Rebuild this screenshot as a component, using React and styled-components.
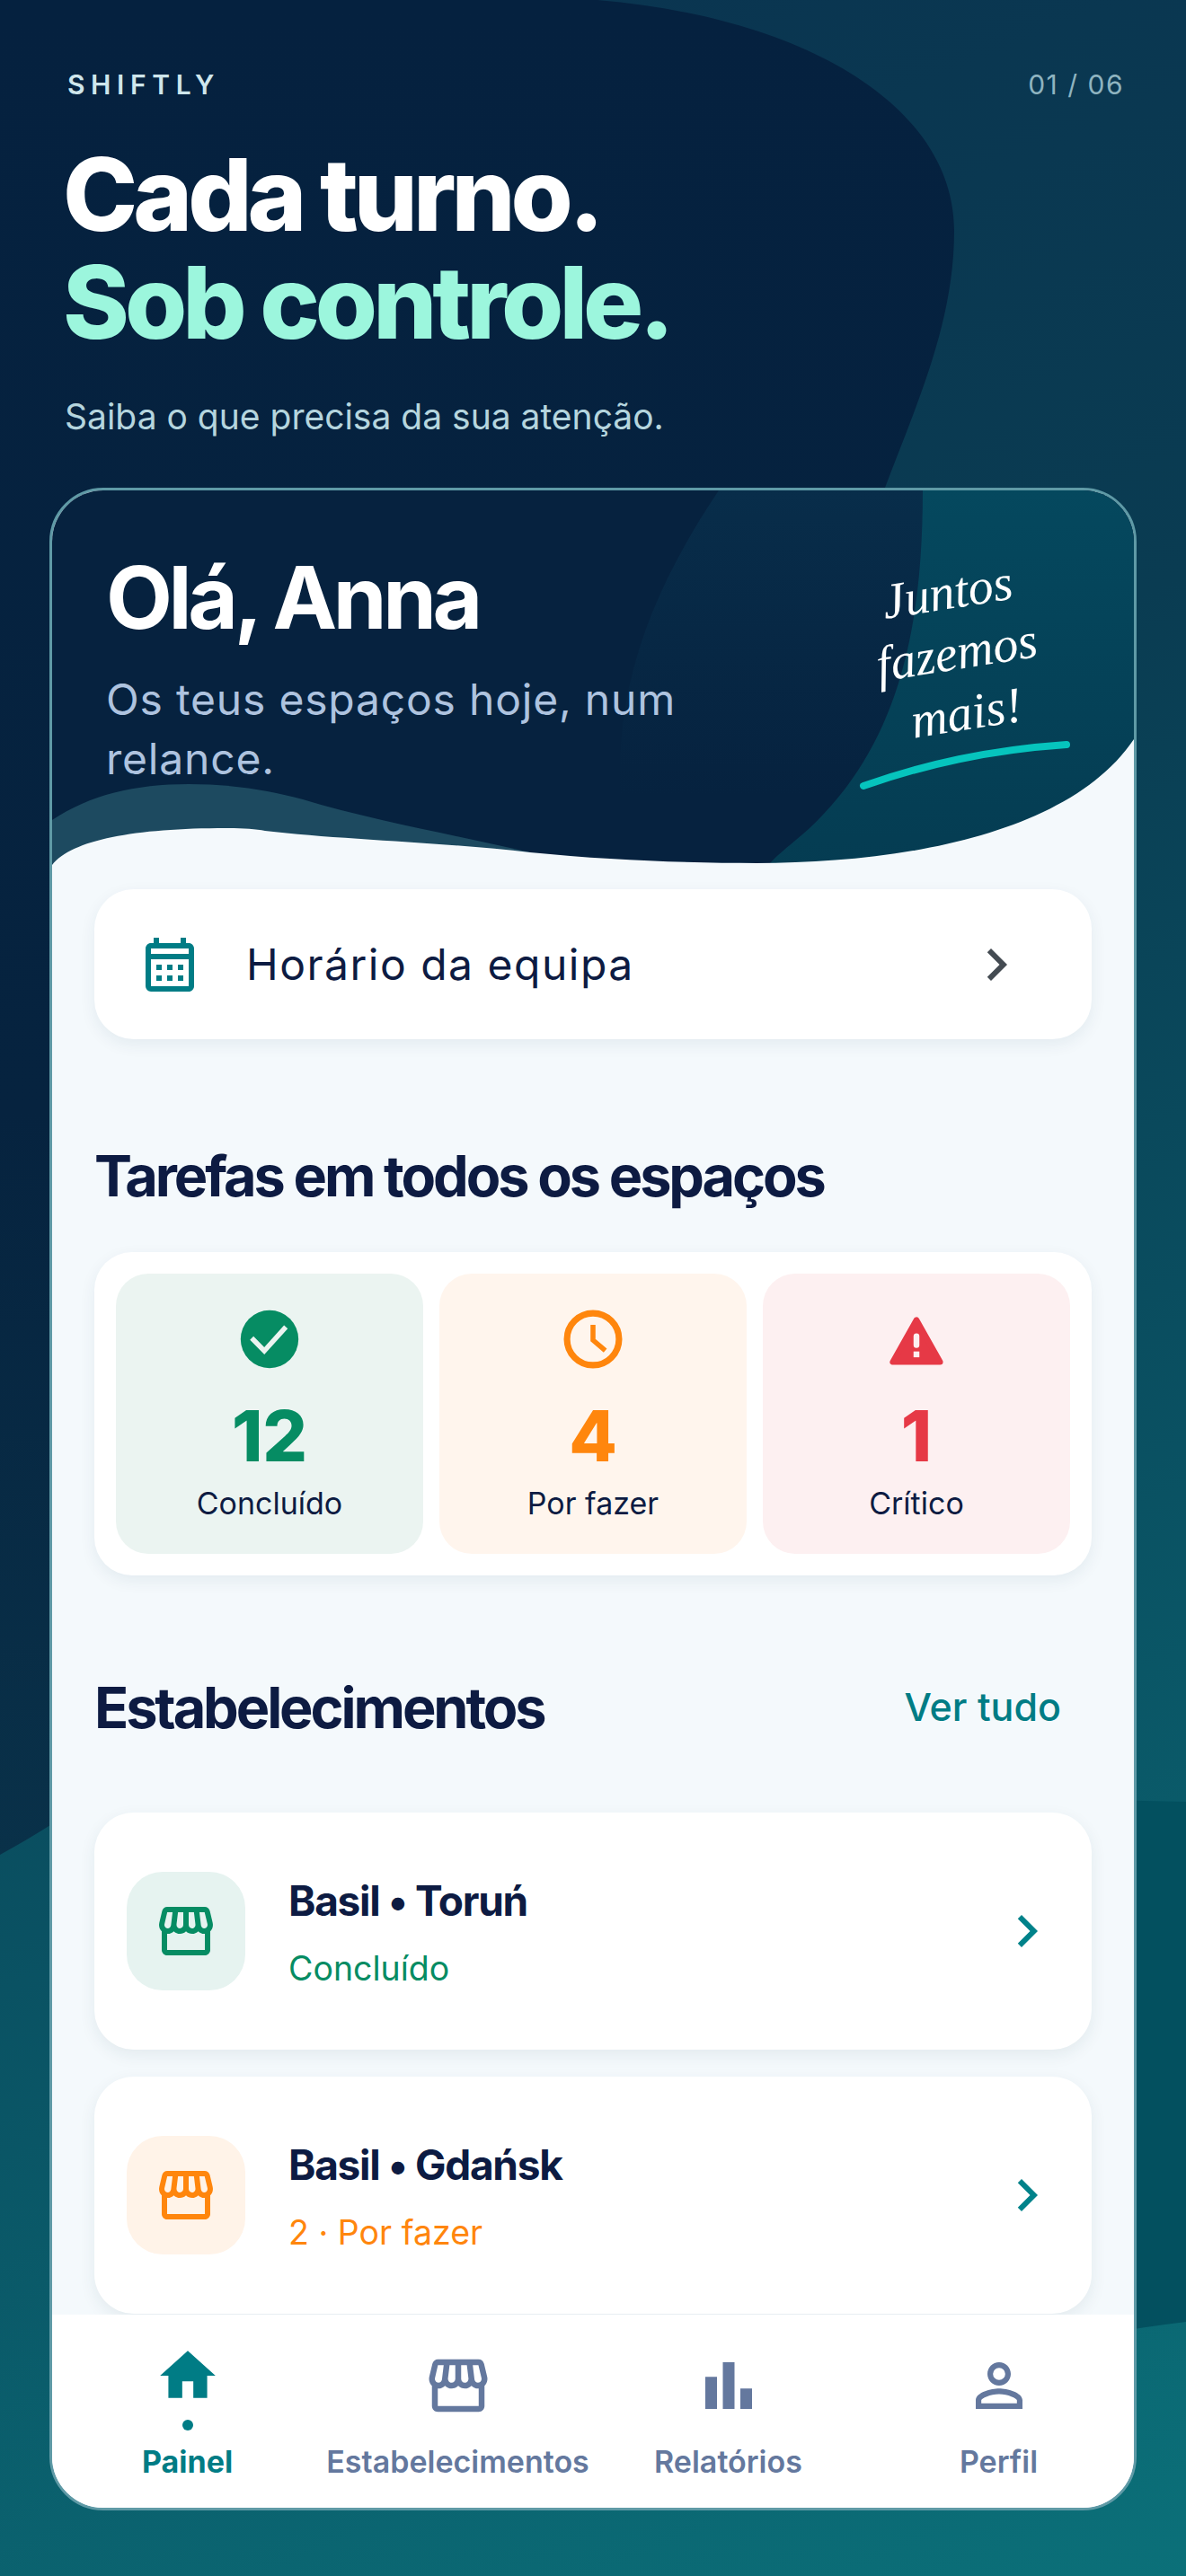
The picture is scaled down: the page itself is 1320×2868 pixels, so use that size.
import React from 'react'
import styled, { createGlobalStyle } from 'styled-components'
import {
  MdOutlineCalendarMonth,
  MdChevronRight,
  MdOutlineStorefront,
  MdHome,
  MdBarChart,
  MdPersonOutline,
} from 'react-icons/md'

function CheckIcon({ size }) {
  return (
    <svg width={size} height={size} viewBox="0 0 24 24">
      <circle cx="12" cy="12" r="9.9" fill="currentColor" />
      <path d="M5.9 11.6L10.2 16L17.6 7.8" fill="none" stroke="#ebf4f1" strokeWidth="1.7" />
    </svg>
  )
}

function ClockIcon({ size }) {
  return (
    <svg width={size} height={size} viewBox="0 0 24 24" fill="none" stroke="currentColor">
      <circle cx="12" cy="12" r="8.9" strokeWidth="2.2" />
      <path d="M12 7.1V12.3L16.2 15.9" strokeWidth="1.7" />
    </svg>
  )
}

function WarningIcon({ size }) {
  return (
    <svg width={size} height={size} viewBox="0 0 24 24">
      <path
        d="M12 5.4L3.9 19.8H20.1Z"
        fill="currentColor"
        stroke="currentColor"
        strokeWidth="2"
        strokeLinejoin="round"
      />
      <rect x="11" y="10" width="2" height="5" rx="1" fill="#fdf0f1" />
      <rect x="11" y="16.2" width="2" height="2" fill="#fdf0f1" />
    </svg>
  )
}

const stats = [
  { value: '12', label: 'Concluído', color: '#068c63', bg: '#ebf4f1', Icon: CheckIcon },
  { value: '4', label: 'Por fazer', color: '#ff860d', bg: '#fff5ed', Icon: ClockIcon },
  { value: '1', label: 'Crítico', color: '#e63946', bg: '#fdf0f1', Icon: WarningIcon },
]

const places = [
  { name: 'Basil • Toruń', status: 'Concluído', color: '#068c63', bg: '#e6f3f0' },
  { name: 'Basil • Gdańsk', status: '2 · Por fazer', color: '#ff860d', bg: '#fff3e8' },
]

const tabs = [
  { label: 'Painel', Icon: MdHome, active: true },
  { label: 'Estabelecimentos', Icon: MdOutlineStorefront },
  { label: 'Relatórios', Icon: MdBarChart },
  { label: 'Perfil', Icon: MdPersonOutline },
]

function App() {
  return (
    <Stage>
      <GlobalStyle />
      <Backdrop viewBox="0 0 1320 2868" preserveAspectRatio="none">
        <defs>
          <linearGradient id="blob" x1="0" y1="0" x2="0" y2="1">
            <stop offset="0" stopColor="#05213f" />
            <stop offset="0.6" stopColor="#06233f" />
            <stop offset="1" stopColor="#093149" />
          </linearGradient>
        </defs>
        <path
          d="M0 0H665C900 20 1062 120 1062 257C1062 360 1020 450 985 543C950 1100 400 1850 0 2065Z"
          fill="url(#blob)"
        />
        <path d="M1000 2000L1320 2006V2585C1200 2600 1100 2620 1000 2640Z" fill="#03505f" />
      </Backdrop>

      <TopBar>
        <Brand>SHIFTLY</Brand>
        <Pager>01 / 06</Pager>
      </TopBar>
      <Headline>
        Cada turno.
        <br />
        <em>Sob controle.</em>
      </Headline>
      <Tagline>Saiba o que precisa da sua atenção.</Tagline>

      <Phone>
        <Hero>
          <HeroArt viewBox="58 546 1204 424" preserveAspectRatio="none">
            <defs>
              <linearGradient id="heroFaint" x1="0" y1="0" x2="0" y2="1">
                <stop offset="0" stopColor="#082d4a" />
                <stop offset="0.8" stopColor="#082d4a" stopOpacity="0" />
              </linearGradient>
              <linearGradient id="heroTeal" x1="0" y1="0" x2="0" y2="1">
                <stop offset="0" stopColor="#05485e" />
                <stop offset="1" stopColor="#053c52" />
              </linearGradient>
            </defs>
            <rect x="58" y="546" width="1204" height="424" fill="#06223f" />
            <path d="M800 546C730 650 690 750 690 860V970H1262V546Z" fill="url(#heroFaint)" />
            <path d="M1027 546C1027 700 1000 830 900 923C875 945 860 955 850 970H1262V546Z" fill="url(#heroTeal)" />
            <path d="M58 913C100 885 150 873 210 873C260 873 300 880 337 890C420 915 510 930 590 949L300 970H58Z" fill="#1d4a60" />
            <path
              d="M58 963C80 935 150 922 252 922C270 922 285 923 295 925C380 935 500 938 590 949C680 958 770 961 842 961C1000 961 1190 930 1262 823V970H58Z"
              fill="#f4f9fc"
            />
            <path d="M961 875C1030 851 1100 835 1187 829" fill="none" stroke="#06c4bd" strokeWidth="8" strokeLinecap="round" />
          </HeroArt>
          <HeroText>
            <Greeting>Olá, Anna</Greeting>
            <Lead>Os teus espaços hoje, num relance.</Lead>
          </HeroText>
          <Note>
            <span>Juntos</span>
            <span>fazemos</span>
            <span>mais!</span>
          </Note>
        </Hero>

        <Body>
          <Shortcut>
            <ShortcutIcon><MdOutlineCalendarMonth size={72} /></ShortcutIcon>
            <ShortcutLabel>Horário da equipa</ShortcutLabel>
            <MdChevronRight size={72} color="#444b52" />
          </Shortcut>

          <SectionTitle>Tarefas em todos os espaços</SectionTitle>
          <StatPanel>
            {stats.map(({ value, label, color, bg, Icon }) => (
              <StatTile key={label} $bg={bg} $color={color}>
                <Icon size={78} />
                <StatValue>{value}</StatValue>
                <StatLabel>{label}</StatLabel>
              </StatTile>
            ))}
          </StatPanel>

          <SectionRow>
            <RowTitle>Estabelecimentos</RowTitle>
            <SeeAll>Ver tudo</SeeAll>
          </SectionRow>
          <PlaceList>
            {places.map((place) => (
              <Place key={place.name}>
                <PlaceIcon $bg={place.bg} $color={place.color}>
                  <MdOutlineStorefront size={72} />
                </PlaceIcon>
                <PlaceText>
                  <PlaceName>{place.name}</PlaceName>
                  <PlaceStatus $color={place.color}>{place.status}</PlaceStatus>
                </PlaceText>
                <MdChevronRight size={72} color="#00828a" />
              </Place>
            ))}
          </PlaceList>
        </Body>

        <TabBar>
          {tabs.map(({ label, Icon, active }) => (
            <Tab key={label} $active={active}>
              <TabIcon $active={active}>
                <Icon size={active ? 74 : 78} />
                {active && <ActiveDot />}
              </TabIcon>
              <TabLabel $active={active}>{label}</TabLabel>
            </Tab>
          ))}
        </TabBar>
      </Phone>
    </Stage>
  )
}

const GlobalStyle = createGlobalStyle`
  html, body {
    margin: 0;
    padding: 0;
  }
  body {
    font-family: Inter, "Noto Sans", sans-serif;
  }
`

const Stage = styled.div`
  position: relative;
  width: 1320px;
  height: 2868px;
  overflow: hidden;
  box-sizing: border-box;
  padding: 76px 55px 0;
  background: linear-gradient(157deg, #0a3350 0%, #0a3c52 35%, #0a5666 70%, #0b7079 100%);
`

const Backdrop = styled.svg`
  position: absolute;
  inset: 0;
  width: 100%;
  height: 100%;
`

const TopBar = styled.div`
  position: relative;
  display: flex;
  justify-content: space-between;
  align-items: center;
  height: 36px;
  padding: 0 14px 0 20px;
`

const Brand = styled.div`
  font-size: 30px;
  font-weight: 600;
  letter-spacing: 0.22em;
  color: #cfe6ec;
`

const Pager = styled.div`
  font-size: 30px;
  letter-spacing: 0.05em;
  color: #8fb4c0;
`

const Headline = styled.h1`
  position: relative;
  margin: 44px 0 0 15px;
  font-size: 112px;
  line-height: 120px;
  font-weight: 800;
  letter-spacing: -5px;
  color: #fff;

  em {
    font-style: normal;
    color: #9cf6dd;
  }
`

const Tagline = styled.p`
  position: relative;
  margin: 40px 0 0 17px;
  font-size: 39px;
  line-height: 56px;
  color: #b5d5de;
`

const Phone = styled.div`
  position: relative;
  display: flex;
  flex-direction: column;
  box-sizing: border-box;
  width: 1210px;
  height: 2252px;
  margin-top: 51px;
  border: 3px solid #5f9aa6;
  border-radius: 60px;
  overflow: hidden;
  background: #f4f9fc;
`

const Hero = styled.div`
  position: relative;
  flex: none;
  display: flex;
  justify-content: space-between;
  height: 424px;
  box-sizing: border-box;
  padding: 64px 107px 0 60px;
`

const HeroArt = styled.svg`
  position: absolute;
  inset: 0;
  width: 100%;
  height: 100%;
`

const HeroText = styled.div`
  position: relative;
  width: 700px;
`

const Greeting = styled.h2`
  margin: 0;
  font-size: 96px;
  line-height: 110px;
  font-weight: 700;
  letter-spacing: -4.4px;
  color: #fff;
`

const Lead = styled.p`
  margin: 26px 0 0;
  font-size: 48px;
  line-height: 66px;
  letter-spacing: 0.8px;
  color: #aec3df;
`

const Note = styled.div`
  position: relative;
  display: flex;
  flex-direction: column;
  align-items: center;
  margin-top: 14px;
  transform: rotate(-9deg);
  font-family: "Liberation Serif", serif;
  font-style: italic;
  font-size: 56px;
  line-height: 68px;
  color: #fff;
  height: 210px;

  span {
    display: block;
  }
`

const Body = styled.div`
  flex: 1;
  min-height: 0;
  overflow: hidden;
  padding: 20px 47px 0;
`

const Shortcut = styled.div`
  display: flex;
  align-items: center;
  height: 167px;
  padding: 0 70px 0 48px;
  border-radius: 44px;
  background: #fff;
  box-shadow: 0 6px 18px rgba(20, 60, 80, 0.07);
`

const ShortcutIcon = styled.div`
  display: flex;
  color: #007c85;
`

const ShortcutLabel = styled.div`
  flex: 1;
  margin-left: 49px;
  font-size: 48px;
  letter-spacing: 1.5px;
  color: #0d1b42;
`

const SectionTitle = styled.h3`
  margin: 116px 0 0;
  font-size: 63px;
  line-height: 72px;
  font-weight: 700;
  letter-spacing: -3.1px;
  color: #0d1b42;
`

const StatPanel = styled.div`
  display: grid;
  grid-template-columns: repeat(3, 1fr);
  gap: 18px;
  margin-top: 49px;
  padding: 24px;
  border-radius: 42px;
  background: #fff;
  box-shadow: 0 6px 18px rgba(20, 60, 80, 0.07);
`

const StatTile = styled.div`
  display: flex;
  flex-direction: column;
  align-items: center;
  height: 312px;
  box-sizing: border-box;
  padding-top: 34px;
  border-radius: 36px;
  background: ${(p) => p.$bg};
  color: ${(p) => p.$color};
`

const StatValue = styled.div`
  margin-top: 24px;
  font-size: 78px;
  line-height: 90px;
  font-weight: 800;
`

const StatLabel = styled.div`
  margin-top: 8px;
  font-size: 34px;
  line-height: 44px;
  color: #0d1b42;
`

const SectionRow = styled.div`
  display: flex;
  justify-content: space-between;
  align-items: center;
  margin-top: 111px;
  padding-right: 34px;
`

const RowTitle = styled(SectionTitle)`
  margin: 0;
`

const SeeAll = styled.div`
  margin-bottom: 3px;
  font-size: 43px;
  font-weight: 500;
  color: #007c85;
`

const PlaceList = styled.div`
  display: flex;
  flex-direction: column;
  gap: 30px;
  margin-top: 81px;
`

const Place = styled.div`
  flex: none;
  display: flex;
  align-items: center;
  height: 264px;
  padding: 0 36px;
  border-radius: 44px;
  background: #fff;
  box-shadow: 0 6px 18px rgba(20, 60, 80, 0.08);
`

const PlaceIcon = styled.div`
  flex: none;
  display: flex;
  align-items: center;
  justify-content: center;
  width: 132px;
  height: 132px;
  border-radius: 40px;
  background: ${(p) => p.$bg};
  color: ${(p) => p.$color};
`

const PlaceText = styled.div`
  flex: 1;
  margin-left: 48px;
  padding-top: 4px;
`

const PlaceName = styled.div`
  font-size: 46px;
  line-height: 56px;
  font-weight: 700;
  letter-spacing: -1.3px;
  color: #0d1b42;
`

const PlaceStatus = styled.div`
  margin-top: 24px;
  font-size: 37.5px;
  line-height: 48px;
  color: ${(p) => p.$color};
`

const TabBar = styled.div`
  flex: none;
  display: grid;
  grid-template-columns: repeat(4, 1fr);
  height: 215px;
  background: #fff;
`

const Tab = styled.div`
  display: flex;
  flex-direction: column;
  align-items: center;
  min-width: 0;
  padding-top: 40px;
  color: ${(p) => (p.$active ? '#007c85' : '#64789e')};
`

const TabIcon = styled.div`
  position: relative;
  display: flex;
  justify-content: center;
  height: 92px;

  svg {
    margin-top: ${(p) => (p.$active ? '-9px' : '0')};
  }
`

const ActiveDot = styled.span`
  position: absolute;
  left: 50%;
  bottom: 3px;
  width: 12px;
  height: 12px;
  margin-left: -6px;
  border-radius: 50%;
  background: #007c85;
`

const TabLabel = styled.div`
  margin-top: 10px;
  font-size: 34px;
  line-height: 44px;
  font-weight: ${(p) => (p.$active ? 700 : 600)};
`

export default App
